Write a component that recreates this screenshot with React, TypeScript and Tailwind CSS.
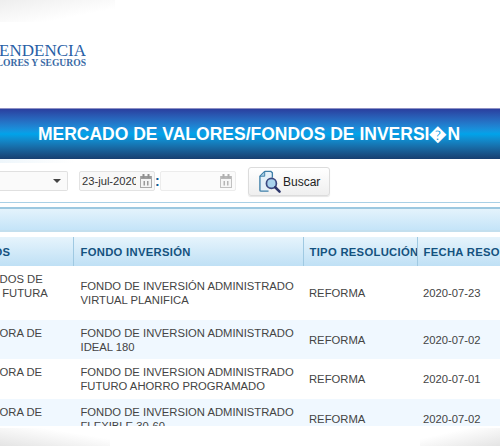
const font = { arial: 'font-["Liberation_Sans",Arial,sans-serif]' };

type Row = {
  admin: string[];
  fondo: string[];
  fecha: string;
  h: string;
  alt: boolean;
};

const rows: Row[] = [
  {
    admin: ['GESTION FONDOS DE', 'PATRIMONIOS FUTURA', 'S.A.'],
    fondo: ['FONDO DE INVERSIÓN ADMINISTRADO', 'VIRTUAL PLANIFICA'],
    fecha: '2020-07-23',
    h: 'h-[54px]',
    alt: false,
  },
  {
    admin: ['ADMINISTRADORA DE', 'FONDOS'],
    fondo: ['FONDO DE INVERSION ADMINISTRADO', 'IDEAL 180'],
    fecha: '2020-07-02',
    h: 'h-[39px]',
    alt: true,
  },
  {
    admin: ['ADMINISTRADORA DE', 'FONDOS'],
    fondo: ['FONDO DE INVERSION ADMINISTRADO', 'FUTURO AHORRO PROGRAMADO'],
    fecha: '2020-07-01',
    h: 'h-[40px]',
    alt: false,
  },
  {
    admin: ['ADMINISTRADORA DE', 'FONDOS'],
    fondo: ['FONDO DE INVERSION ADMINISTRADO', 'FLEXIBLE 30-60'],
    fecha: '2020-07-02',
    h: 'h-[40px]',
    alt: true,
  },
];

function CalendarIcon() {
  return (
    <svg width="12" height="14" viewBox="0 0 12 14" className="shrink-0">
      <rect x="0.5" y="2.5" width="11" height="11" fill="#f4f4f4" stroke="#a9a9a9" />
      <rect x="1" y="2" width="10" height="3" fill="#9c9c9c" />
      <rect x="2.5" y="0" width="2" height="4" fill="#8f8f8f" />
      <rect x="7.5" y="0" width="2" height="4" fill="#8f8f8f" />
      <rect x="3.5" y="7" width="1.5" height="4.5" fill="#9a9a9a" />
      <rect x="7" y="7" width="1.5" height="4.5" fill="#9a9a9a" />
    </svg>
  );
}

function SearchDocIcon() {
  return (
    <svg width="23" height="23" viewBox="0 0 24 24" className="shrink-0">
      <path d="M7 1.5h6.5l1.5 1.5v5L9 12l2 10H3.2C2.6 22 2 21.8 2 21V6.5z" fill="#e4f0f8" />
      <path
        d="M7 1.5h6.5l1.5 1.5v5M7 1.5L2 6.5v14.5c0 .8.6 1 1.2 1H11"
        fill="none"
        stroke="#3f7fa8"
        strokeWidth="1.4"
      />
      <path d="M7 1.5v5H2z" fill="#a9cfe6" stroke="#3f7fa8" strokeWidth="1" />
      <circle cx="14" cy="14" r="5.2" fill="#a9d3ee" stroke="#3c4a82" strokeWidth="1.8" />
      <path d="M18 18l4.5 4.5" stroke="#2c356b" strokeWidth="2.6" strokeLinecap="round" />
    </svg>
  );
}

export default function App() {
  return (
    <div className={`relative h-[446px] w-[500px] overflow-hidden bg-white ${font.arial}`}>
      {/* corner shading of the page background */}
      <div className="absolute left-0 top-0 h-[22px] w-[115px] bg-gradient-to-br from-[#eeeeee] to-white to-70%" />
      <div className="absolute bottom-0 left-0 h-[18px] w-[110px] bg-gradient-to-tr from-[#e4e4e4] to-white to-70%" />
      <div className="absolute bottom-0 right-0 h-[18px] w-[80px] bg-gradient-to-tl from-[#e4e4e4] to-white to-70%" />

      {/* logo */}
      <header className="relative flex h-[108px] items-start pt-[43px]">
        <div className="w-[86px] overflow-hidden font-['Liberation_Serif',serif]">
          <div className="flex justify-end whitespace-nowrap text-[17px] leading-[15px] text-[#2860a6]">
            SUPERINTENDENCIA
          </div>
          <div className="flex justify-end whitespace-nowrap text-[9.6px] font-bold leading-[9px] text-[#3a6aa5]">
            DE VALORES Y SEGUROS
          </div>
        </div>
      </header>

      {/* title banner */}
      <div className="relative flex h-[51px] items-center justify-center border-t border-[#8f90c4] bg-gradient-to-b from-[#2a3f9f] via-[#00a3ea] via-50% to-[#173f70] pr-[2px] pt-[1px]">
        <h1 className="whitespace-nowrap text-[17.5px] font-bold text-white">
          MERCADO DE VALORES/FONDOS DE INVERSI�N
        </h1>
      </div>

      {/* filters */}
      <div className="relative flex h-[44px] items-start border-b border-[#a9d0e6] pt-[9px]">
        <div className="absolute left-0 top-0 h-[4px] w-[75px] bg-gradient-to-r from-[#eef6fb] to-white" />
        <div className="mt-[3px] flex h-[20px] w-[68px] items-center justify-end rounded-r-[2px] border border-l-0 border-[#e0e0e0] bg-[#fafafa] pr-[6px]">
          <div className="h-0 w-0 border-x-[4px] border-t-[4px] border-x-transparent border-t-[#444]" />
        </div>
        <div className="ml-[11px] mt-[3px] flex h-[20px] w-[76px] items-center overflow-hidden rounded-[2px] border border-[#e3e3e3] bg-[#f8f8f8] pl-[2px]">
          <span className="w-[54px] shrink-0 overflow-hidden whitespace-nowrap text-[11.2px] text-[#333]">23-jul-2020</span>
          <span className="ml-[4px] flex">
            <CalendarIcon />
          </span>
        </div>
        <span className="mt-[3px] w-[5px] text-[14px] font-bold leading-[20px] text-[#0d5a94]">:</span>
        <div className="mt-[3px] flex h-[20px] w-[76px] items-center justify-end rounded-[2px] border border-[#ececec] bg-[#fbfbfb] pr-[3px]">
          <span className="flex opacity-70">
            <CalendarIcon />
          </span>
        </div>
        <button className="-mt-[1px] ml-[12px] flex h-[29px] w-[82px] items-center gap-[2px] rounded-[3px] border border-[#dcdcdc] bg-gradient-to-b from-white to-[#efefef] pl-[9px] text-[12px] text-[#222] shadow-[0_1px_1px_#e6e6e6]">
          <SearchDocIcon />
          Buscar
        </button>
      </div>

      {/* section bar */}
      <div className="relative mt-[4px] h-[25px] border-y-2 border-t-[#9cc8e0] border-b-[#c3dfee] bg-gradient-to-b from-[#e4f3fc] to-[#c4e4f8]" />

      {/* results table */}
      <div className="relative mt-[5px] h-[189px] overflow-hidden">
        <table className="-ml-[83px] w-[583px] table-fixed border-collapse text-[11.25px] leading-[14px] text-[#444]">
          <colgroup>
            <col className="w-[156px]" />
            <col className="w-[230px]" />
            <col className="w-[114px]" />
            <col className="w-[83px]" />
          </colgroup>
          <thead>
            <tr className="h-[29px] bg-gradient-to-b from-[#e6f4fc] to-[#bfe0f5] text-left font-bold tracking-[0.3px] text-[#14527f]">
              <th className="overflow-hidden whitespace-nowrap border-r border-[#9fc9e2] pl-[10px]">ADM. FONDOS</th>
              <th className="overflow-hidden whitespace-nowrap border-r border-[#9fc9e2] pl-[7px]">FONDO INVERSIÓN</th>
              <th className="overflow-hidden whitespace-nowrap border-r border-[#9fc9e2] pl-[6px]">TIPO RESOLUCIÓN</th>
              <th className="overflow-hidden whitespace-nowrap pl-[6px]">FECHA RESOLUCIÓN</th>
            </tr>
          </thead>
          <tbody>
            {rows.map((row) => (
              <tr key={row.fondo[1]} className={`${row.h} ${row.alt ? 'bg-[#f0f8ff]' : 'bg-white'}`}>
                <td className="overflow-hidden whitespace-nowrap pl-[5px] align-middle">
                  {row.admin.map((line) => (
                    <div key={line}>{line}</div>
                  ))}
                </td>
                <td className="whitespace-nowrap pl-[7.5px] align-middle">
                  {row.fondo.map((line) => (
                    <div key={line}>{line}</div>
                  ))}
                </td>
                <td className="pl-[6px] align-middle">REFORMA</td>
                <td className="pl-[6px] align-middle">{row.fecha}</td>
              </tr>
            ))}
          </tbody>
        </table>
      </div>
    </div>
  );
}
